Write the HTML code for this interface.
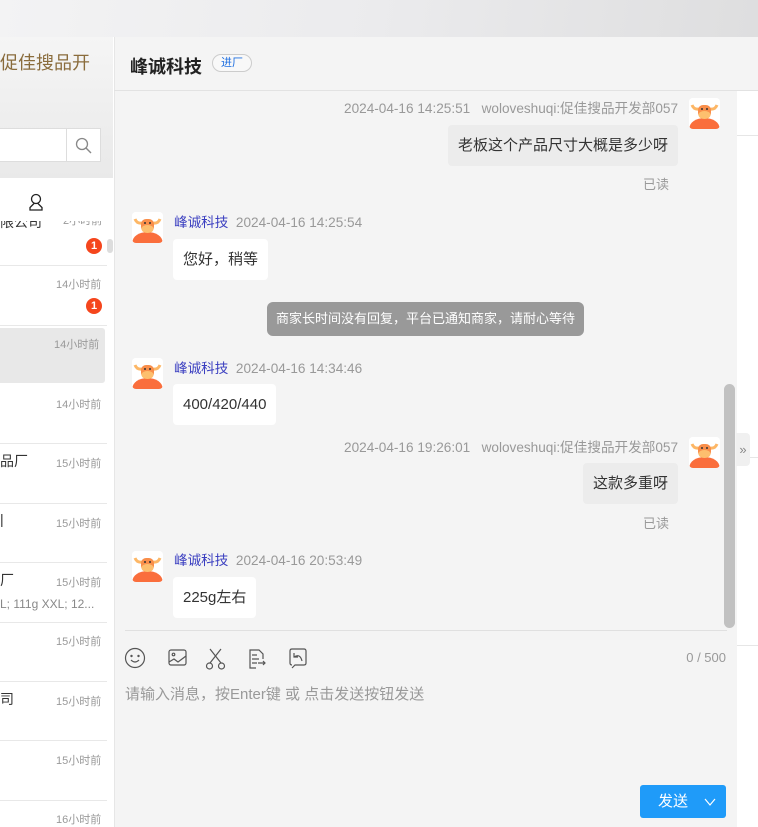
<!DOCTYPE html>
<html><head><meta charset="utf-8"><style>
*{margin:0;padding:0;box-sizing:border-box}
body{width:758px;height:827px;overflow:hidden;position:relative;background:#fff;font-family:"Liberation Sans","Noto Sans CJK SC",sans-serif;}
.a{position:absolute}
.top{left:0;top:0;width:758px;height:37px;background:linear-gradient(100deg,#f3f3f4 0%,#ebebed 50%,#dededf 100%)}
.lp{left:0;top:37px;width:113px;height:141px;background:linear-gradient(180deg,#f5f5f5,#e9e9e9)}
.chat{left:114px;top:37px;width:644px;height:790px;background:#f4f4f4;border-left:1px solid #e6e6e6}
.item{left:0;width:107px;height:1px;background:#e8e8e8}
.t{font-size:11px;color:#999;}
.badge{width:16px;height:16px;border-radius:8px;background:#f5461d;color:#fff;font-size:11px;text-align:center;line-height:16px;font-weight:bold}
.av{width:31px;height:31px;background:#fff;border-radius:4px;overflow:hidden}
.meta{font-size:13.6px;color:#999;white-space:nowrap}
.bub{background:#fff;border-radius:4px;font-size:15px;color:#333;padding:0 10px;line-height:41px;height:41px;white-space:nowrap}
.bub.me{background:#ececec}
.nm{color:#3a3ec0}
.read{font-size:13px;color:#999}
</style></head><body>
<div class="a top"></div>
<div class="a lp"></div>
<div class="a" style="left:0;top:49px;font-size:18px;color:#8a6c3c;">促佳搜品开</div>
<div class="a" style="left:0;top:128px;width:101px;height:34px;background:#fff;border:1px solid #ddd;border-left:none"></div>
<div class="a" style="left:66px;top:129px;width:1px;height:32px;background:#ddd"></div>
<svg class="a" style="left:74px;top:136px" width="20" height="20" viewBox="0 0 20 20"><circle cx="8" cy="8" r="5.5" fill="none" stroke="#888" stroke-width="1.3"/><path d="M12 12l5 5" stroke="#888" stroke-width="1.4"/></svg>
<div class="a" style="left:0;top:178px;width:113px;height:43px;background:#fff"></div>
<svg class="a" style="left:28px;top:193px" width="16" height="20" viewBox="0 0 16 20"><circle cx="8" cy="6" r="4.5" fill="none" stroke="#222" stroke-width="1.3"/><path d="M6 10.5 L2 14.5 V17 H14 V14.5 L10 10.5" fill="none" stroke="#222" stroke-width="1.3"/></svg>
<div class="a" style="left:0;top:212px;font-size:14px;color:#333;clip-path:inset(9px 0 0 0)">限公司</div>
<div class="a t" style="left:63px;top:212px;clip-path:inset(9px 0 0 0)">2小时前</div>
<div class="a" style="left:107px;top:239px;width:6px;height:14px;background:#ddd;border-radius:3px"></div>
<div class="a badge" style="left:86px;top:238px">1</div>
<div class="a item" style="top:265px"></div>
<div class="a t" style="left:56px;top:276px">14小时前</div>
<div class="a badge" style="left:86px;top:298px">1</div>
<div class="a item" style="top:325px"></div>
<div class="a" style="left:0;top:328px;width:105px;height:55px;background:#e8e8e8;border-radius:0 3px 3px 0"></div>
<div class="a t" style="left:54px;top:336px">14小时前</div>
<div class="a t" style="left:56px;top:396px">14小时前</div>
<div class="a item" style="top:443px"></div>
<div class="a" style="left:0;top:451px;font-size:14px;color:#333">品厂</div>
<div class="a t" style="left:56px;top:455px">15小时前</div>
<div class="a item" style="top:503px"></div>
<div class="a" style="left:0;top:511px;font-size:14px;color:#333">|</div>
<div class="a t" style="left:56px;top:515px">15小时前</div>
<div class="a item" style="top:562px"></div>
<div class="a" style="left:0;top:570px;font-size:14px;color:#333">厂</div>
<div class="a t" style="left:56px;top:574px">15小时前</div>
<div class="a" style="left:0;top:597px;font-size:12px;color:#888;white-space:nowrap">L; 111g XXL; 12...</div>
<div class="a item" style="top:622px"></div>
<div class="a t" style="left:56px;top:633px">15小时前</div>
<div class="a item" style="top:681px"></div>
<div class="a" style="left:0;top:689px;font-size:14px;color:#333">司</div>
<div class="a t" style="left:56px;top:693px">15小时前</div>
<div class="a item" style="top:740px"></div>
<div class="a t" style="left:56px;top:752px">15小时前</div>
<div class="a item" style="top:800px"></div>
<div class="a t" style="left:56px;top:811px">16小时前</div>

<div class="a chat"></div>
<div class="a" style="left:114px;top:90px;width:644px;height:1px;background:#e2e2e2"></div>
<div class="a" style="left:130px;top:53px;font-size:18px;font-weight:bold;color:#222">峰诚科技</div>
<div class="a" style="left:212px;top:54px;width:40px;height:18px;border:1px solid #ccc;border-radius:9px;font-size:11px;color:#1f6fe0;text-align:center;line-height:16px;background:#f8f8f8">进厂</div>
<div class="a" style="left:737px;top:91px;width:21px;height:736px;background:#fff"></div>
<div class="a" style="left:737px;top:135px;width:21px;height:1px;background:#e6e6e6"></div>
<div class="a" style="left:737px;top:457px;width:21px;height:1px;background:#e6e6e6"></div>
<div class="a" style="left:737px;top:645px;width:21px;height:1px;background:#e6e6e6"></div>
<div class="a" style="left:736px;top:433px;width:14px;height:33px;background:#f0f0f0;border-radius:0 4px 4px 0;color:#888;font-size:13px;line-height:33px;text-align:center">»</div>
<div class="a" style="left:724px;top:384px;width:11px;height:244px;background:#c1c1c1;border-radius:6px"></div>

<svg width="0" height="0" style="position:absolute"><defs><g id="bull"><rect width="31" height="31" fill="#fff"/><ellipse cx="15.5" cy="30" rx="15" ry="10" fill="#fa6e3c"/><path d="M3 7 Q5 12 10 11 M28 7 Q26 12 21 11" stroke="#fdb766" stroke-width="3" fill="none"/><rect x="9" y="7" width="13" height="13" rx="5" fill="#f98e4a"/><ellipse cx="15.5" cy="17" rx="6" ry="4" fill="#fdbf6e"/><circle cx="13" cy="11" r="1" fill="#333"/><circle cx="18" cy="11" r="1" fill="#333"/></g></defs></svg>

<div class="a meta" style="right:80px;top:97px">2024-04-16 14:25:51&nbsp;&nbsp;&nbsp;woloveshuqi:促佳搜品开发部057</div>
<svg class="a av" style="left:689px;top:98px" viewBox="0 0 31 31"><use href="#bull"/></svg>
<div class="a bub me" style="right:80px;top:125px">老板这个产品尺寸大概是多少呀</div>
<div class="a read" style="left:643px;top:174px">已读</div>

<svg class="a av" style="left:132px;top:212px" viewBox="0 0 31 31"><use href="#bull"/></svg>
<div class="a meta" style="left:174px;top:211px"><span class="nm">峰诚科技</span>&nbsp;&nbsp;2024-04-16 14:25:54</div>
<div class="a bub" style="left:173px;top:239px">您好，稍等</div>

<div class="a" style="left:267px;top:302px;width:317px;height:34px;background:#999;border-radius:6px;color:#fff;font-size:13px;line-height:34px;text-align:center">商家长时间没有回复，平台已通知商家，请耐心等待</div>

<svg class="a av" style="left:132px;top:358px" viewBox="0 0 31 31"><use href="#bull"/></svg>
<div class="a meta" style="left:174px;top:357px"><span class="nm">峰诚科技</span>&nbsp;&nbsp;2024-04-16 14:34:46</div>
<div class="a bub" style="left:173px;top:384px">400/420/440</div>

<div class="a meta" style="right:80px;top:436px">2024-04-16 19:26:01&nbsp;&nbsp;&nbsp;woloveshuqi:促佳搜品开发部057</div>
<svg class="a av" style="left:689px;top:437px" viewBox="0 0 31 31"><use href="#bull"/></svg>
<div class="a bub me" style="right:80px;top:463px">这款多重呀</div>
<div class="a read" style="left:643px;top:513px">已读</div>

<svg class="a av" style="left:132px;top:551px" viewBox="0 0 31 31"><use href="#bull"/></svg>
<div class="a meta" style="left:174px;top:549px"><span class="nm">峰诚科技</span>&nbsp;&nbsp;2024-04-16 20:53:49</div>
<div class="a bub" style="left:173px;top:577px">225g左右</div>

<div class="a" style="left:125px;top:630px;width:602px;height:1px;background:#e0e0e0"></div>
<svg class="a" style="left:124px;top:647px" width="190" height="24" viewBox="0 0 190 24" fill="none" stroke="#555" stroke-width="1.2">
<circle cx="11" cy="11" r="9.5"/><circle cx="7.5" cy="9" r=".6" fill="#555"/><circle cx="14.5" cy="9" r=".6" fill="#555"/><path d="M7 13 Q11 17 15 13"/>
<rect x="45" y="3" width="17" height="15" rx="2"/><circle cx="49.5" cy="7.5" r="1.3"/><path d="M45 15 L50 12 L54 15 L62 9"/>
<path d="M86 2 L97 16 M97 2 L86 16"/><circle cx="85.5" cy="19" r="3"/><circle cx="97.5" cy="19" r="3"/>
<path d="M132 21 H126 V3 H135 L139 7 V12 M128 8 H133 M128 12 H135 M128 16 H133 M134 16 H141 M139 14 L141 16 L139 18"/>
<path d="M168 21 L171 18 H180 Q182 18 182 16 V4 Q182 2 180 2 H168 Q166 2 166 4 V16 Q166 18 168 18"/><path d="M170 6 L170 10 L174 10 M170 10 Q176 6 178 14"/>
</svg>
<div class="a" style="right:32px;top:650px;font-size:13px;color:#999">0 / 500</div>
<div class="a" style="left:125px;top:683px;font-size:15px;color:#999">请输入消息，按Enter键 或 点击发送按钮发送</div>
<div class="a" style="left:640px;top:785px;width:86px;height:33px;background:#1f9bf9;border-radius:3px;color:#fff;font-size:15px;line-height:33px;padding-left:18px">发送<svg style="position:absolute;left:64px;top:13px" width="12" height="8" viewBox="0 0 12 8"><path d="M1 1 L6 7 L11 1" fill="none" stroke="#fff" stroke-width="1.2"/></svg></div>
</body></html>
